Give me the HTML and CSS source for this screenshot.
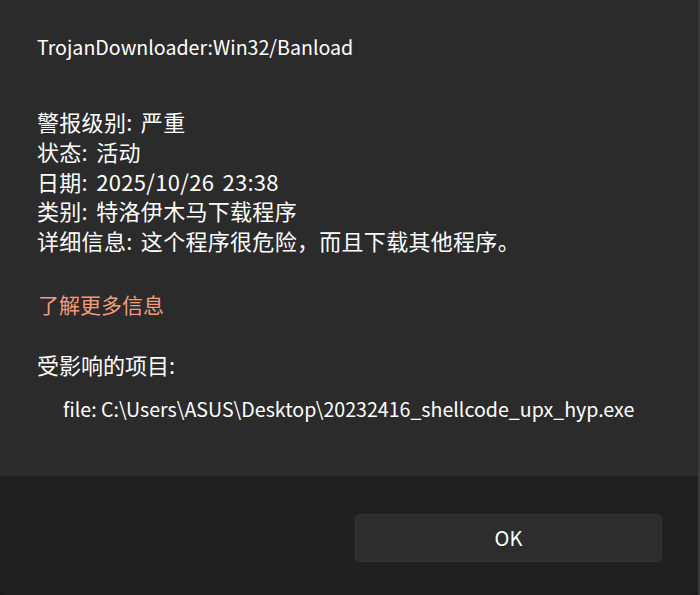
FILE: index.html
```html
<!DOCTYPE html>
<html lang="zh-CN">
<head>
<meta charset="utf-8">
<title>Windows 安全中心</title>
<link rel="stylesheet" href="styles.css">
</head>
<body>
<div class="screen">
  <div class="dialog">
    <div class="content">
      <div class="title">TrojanDownloader:Win32/Banload</div>
      <div class="details">
        <div class="row">警报级别: 严重</div>
        <div class="row">状态: 活动</div>
        <div class="row">日期: 2025/10/26 23:38</div>
        <div class="row">类别: 特洛伊木马下载程序</div>
        <div class="row">详细信息: 这个程序很危险，而且下载其他程序。</div>
      </div>
      <a class="link" href="#">了解更多信息</a>
      <div class="affected">受影响的项目:</div>
      <div class="file">file: C:\Users\ASUS\Desktop\20232416_shellcode_upx_hyp.exe</div>
    </div>
    <div class="footer">
      <button class="ok">OK</button>
    </div>
  </div>
  <div class="behind"></div>
</div>
</body>
</html>
```

FILE: styles.css
```css
html, body {
  margin: 0;
  padding: 0;
  width: 700px;
  height: 595px;
  overflow: hidden;
  background: #1a1a1a;
}
.screen {
  display: flex;
  width: 700px;
  height: 595px;
}
.dialog {
  width: 698px;
  height: 595px;
  display: flex;
  flex-direction: column;
  background: #2b2b2b;
  border-radius: 0 0 8px 8px;
  overflow: hidden;
  font-family: "Segoe UI", "Noto Sans CJK SC", sans-serif;
  color: #ffffff;
}
.behind {
  width: 2px;
  height: 595px;
  background: #3a3a3a;
}
.content {
  flex: 1;
  padding: 32px 0 0 37px;
  font-size: 19.6px;
}
.title {
  line-height: 30px;
}
.details {
  margin-top: 45px;
  font-size: 22px;
  word-spacing: 3px;
  letter-spacing: 0.3px;
}
.row {
  line-height: 29.75px;
}
.link {
  display: block;
  margin-top: 33px;
  padding-left: 1px;
  font-size: 21px;
  line-height: 30px;
  color: #f39c7c;
  text-decoration: none;
}
.affected {
  margin-top: 30px;
  font-size: 22px;
  line-height: 30px;
}
.file {
  margin-top: 15px;
  padding-left: 26px;
  line-height: 30px;
}
.footer {
  height: 119px;
  background: #202020;
  border-top: 1px solid #1d1d1d;
  display: flex;
  justify-content: flex-end;
  align-items: flex-start;
  padding: 37px 36px 0 0;
  box-sizing: border-box;
}
.ok {
  width: 307px;
  height: 48px;
  background: #2d2d2d;
  border: 1px solid #353535;
  border-radius: 5px;
  color: #ffffff;
  font-family: "Segoe UI", "Noto Sans CJK SC", sans-serif;
  font-size: 20px;
  padding: 0 0 2px 0;
}
```
